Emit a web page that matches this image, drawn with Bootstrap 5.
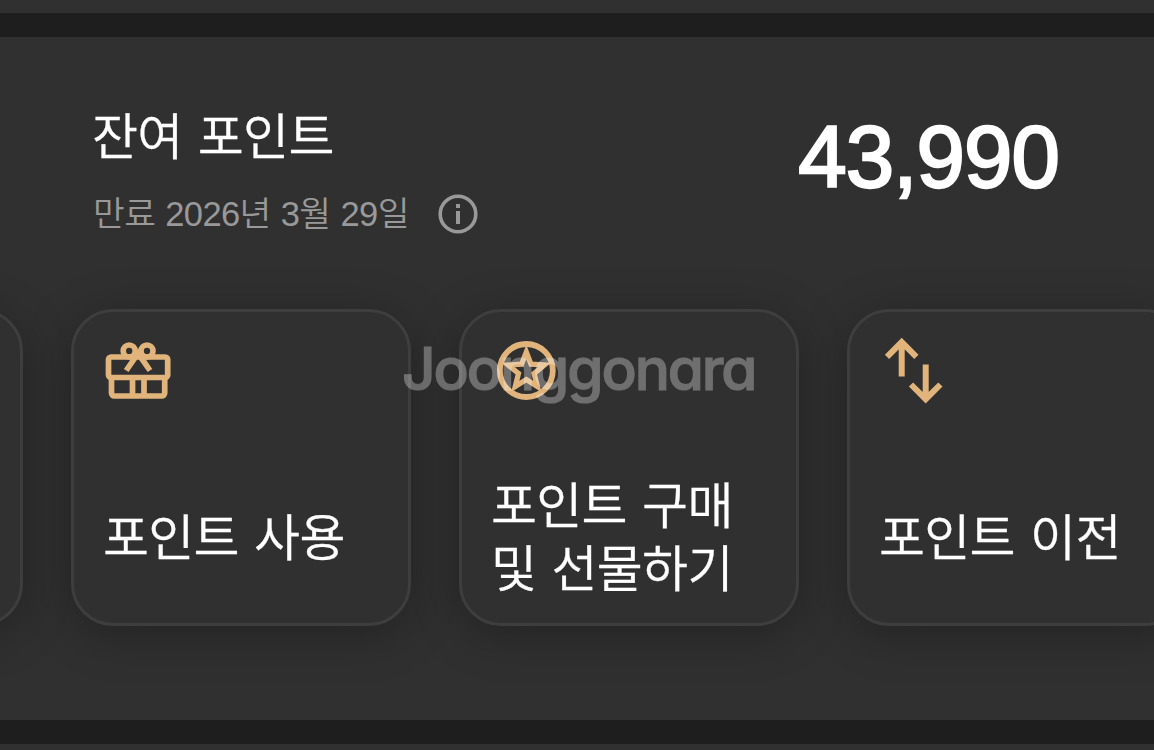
<!DOCTYPE html>
<html lang="ko">

<head>
    <meta charset="UTF-8">
    <meta name="viewport" content="width=device-width, initial-scale=1">
    <title>잔여 포인트</title>
    <!-- Bootstrap CSS -->
    <link href="https://cdn.jsdelivr.net/npm/bootstrap@5.3.0/dist/css/bootstrap.min.css" rel="stylesheet">
    <style>
        body {
            background: #303030;
            color: #fff;
            font-family: "Liberation Sans", "Noto Sans CJK KR", sans-serif;
        }

        .divider-band {
            height: 24px;
            background: #1e1e1e;
        }

        .top-strip {
            height: 13px;
        }

        .points-panel {
            height: 683px;
            padding-top: 70px;
        }

        .points-head {
            height: 202px;
            padding: 0 95px 0 92px;
        }

        .points-title,
        .tile-label {
            font-size: 50px;
            line-height: 63px;
            letter-spacing: -0.7px;
            word-spacing: 2px;
            font-weight: 350;
            -webkit-text-stroke: .3px #fff;
            white-space: nowrap;
        }

        .points-expiry {
            font-size: 34.5px;
            line-height: 40px;
            letter-spacing: -0.6px;
            word-spacing: 1px;
            font-weight: 350;
            color: #999;
            margin-top: 24px;
            padding-left: 1px;
            gap: 29px;
        }

        .points-total {
            font-size: 87px;
            line-height: 100px;
            letter-spacing: -0.9px;
            -webkit-text-stroke: 2.4px #fff;
            margin-top: 0;
        }

        .tile-row {
            gap: 48px;
            margin-left: -317px;
        }

        .tile {
            width: 340px;
            height: 317px;
            background: #303030;
            border: 3px solid #3e3e3e;
            border-radius: 42px;
            box-shadow: 0 8px 48px rgba(0, 0, 0, .28);
            padding: 23px 29px 19px;
            color: #fff;
        }

        .tile svg {
            width: 72px;
            height: 72px;
        }

        .tile-label {
            height: 130px;
        }

        .watermark {
            left: 402px;
            top: 331px;
            font-family: Inter, sans-serif;
            font-feature-settings: "cv11";
            font-size: 58.5px;
            font-weight: 550;
            line-height: 76px;
            letter-spacing: -2.1px;
            color: #fff;
            -webkit-text-stroke: 1.2px #fff;
            opacity: .3;
            pointer-events: none;
        }
    </style>
</head>

<body class="overflow-hidden position-relative vh-100">

    <div class="top-strip"></div>
    <div class="divider-band"></div>

    <main class="points-panel overflow-hidden">
        <!-- Saldo y fecha de vencimiento -->
        <div class="points-head d-flex justify-content-between align-items-start">
            <div>
                <div class="points-title">잔여 포인트</div>
                <div class="points-expiry d-flex align-items-center">
                    <span>만료 2026년 3월 29일</span>
                    <svg width="40" height="40" viewBox="0 0 40 40" fill="none" stroke="#999">
                        <circle cx="20" cy="20" r="17.8" stroke-width="3.6" />
                        <path d="M20 10v4M20 17v13" stroke-width="4" />
                    </svg>
                </div>
            </div>
            <div class="points-total">43,990</div>
        </div>

        <!-- Accesos -->
        <div class="tile-row d-flex">
            <div class="tile flex-shrink-0"></div>
            <a href="#" class="tile flex-shrink-0 d-flex flex-column justify-content-between text-decoration-none">
                <svg viewBox="0 0 72 72" fill="none" stroke="#e1b47c" stroke-width="5.700">
                    <rect x="5.500" y="22" width="59.200" height="20.500" rx="2.500" />
                    <path d="M8.500 42.500v15.500a3 3 0 0 0 3 3h47.200a3 3 0 0 0 3-3V42.500M29.500 42.500v18M41 42.500v18" />
                    <circle cx="26.200" cy="16" r="6" />
                    <circle cx="44" cy="16" r="6" />
                    <path d="M23.200 35.500l9-13 2.900-4 2.900 4 9 13" />
                </svg>
                <div class="tile-label d-flex align-items-center"><span>포인트 사용</span></div>
            </a>
            <a href="#" class="tile flex-shrink-0 d-flex flex-column justify-content-between text-decoration-none">
                <svg viewBox="0 0 72 72" fill="none" stroke="#e1b47c" stroke-width="5.800">
                    <circle cx="35.300" cy="35.500" r="26.500" />
                    <path d="M35.300 17l4.700 12.200 13.500 .8-10.400 8.500 3.300 13-11.100-7-11.100 7 3.300-13-10.400-8.500 13.500-.8z" stroke-width="5.200" />
                </svg>
                <div class="tile-label d-flex align-items-center"><span>포인트 구매<br>및 선물하기</span></div>
            </a>
            <a href="#" class="tile flex-shrink-0 d-flex flex-column justify-content-between text-decoration-none">
                <svg viewBox="0 0 72 72" fill="none" stroke="#e1b47c" stroke-width="6">
                    <path d="M22.700 41.500V7.500M8 21.800L22.700 7.100 37.400 21.800" />
                    <path d="M46.700 29.500V63.500M32 49.500l14.700 14.700 14.700-14.700" />
                </svg>
                <div class="tile-label d-flex align-items-center"><span>포인트 이전</span></div>
            </a>
        </div>
    </main>

    <div class="divider-band"></div>

    <div class="watermark position-absolute">Joonggonara</div>

    <script src="https://cdn.jsdelivr.net/npm/bootstrap@5.3.0/dist/js/bootstrap.bundle.min.js"></script>
</body>

</html>
